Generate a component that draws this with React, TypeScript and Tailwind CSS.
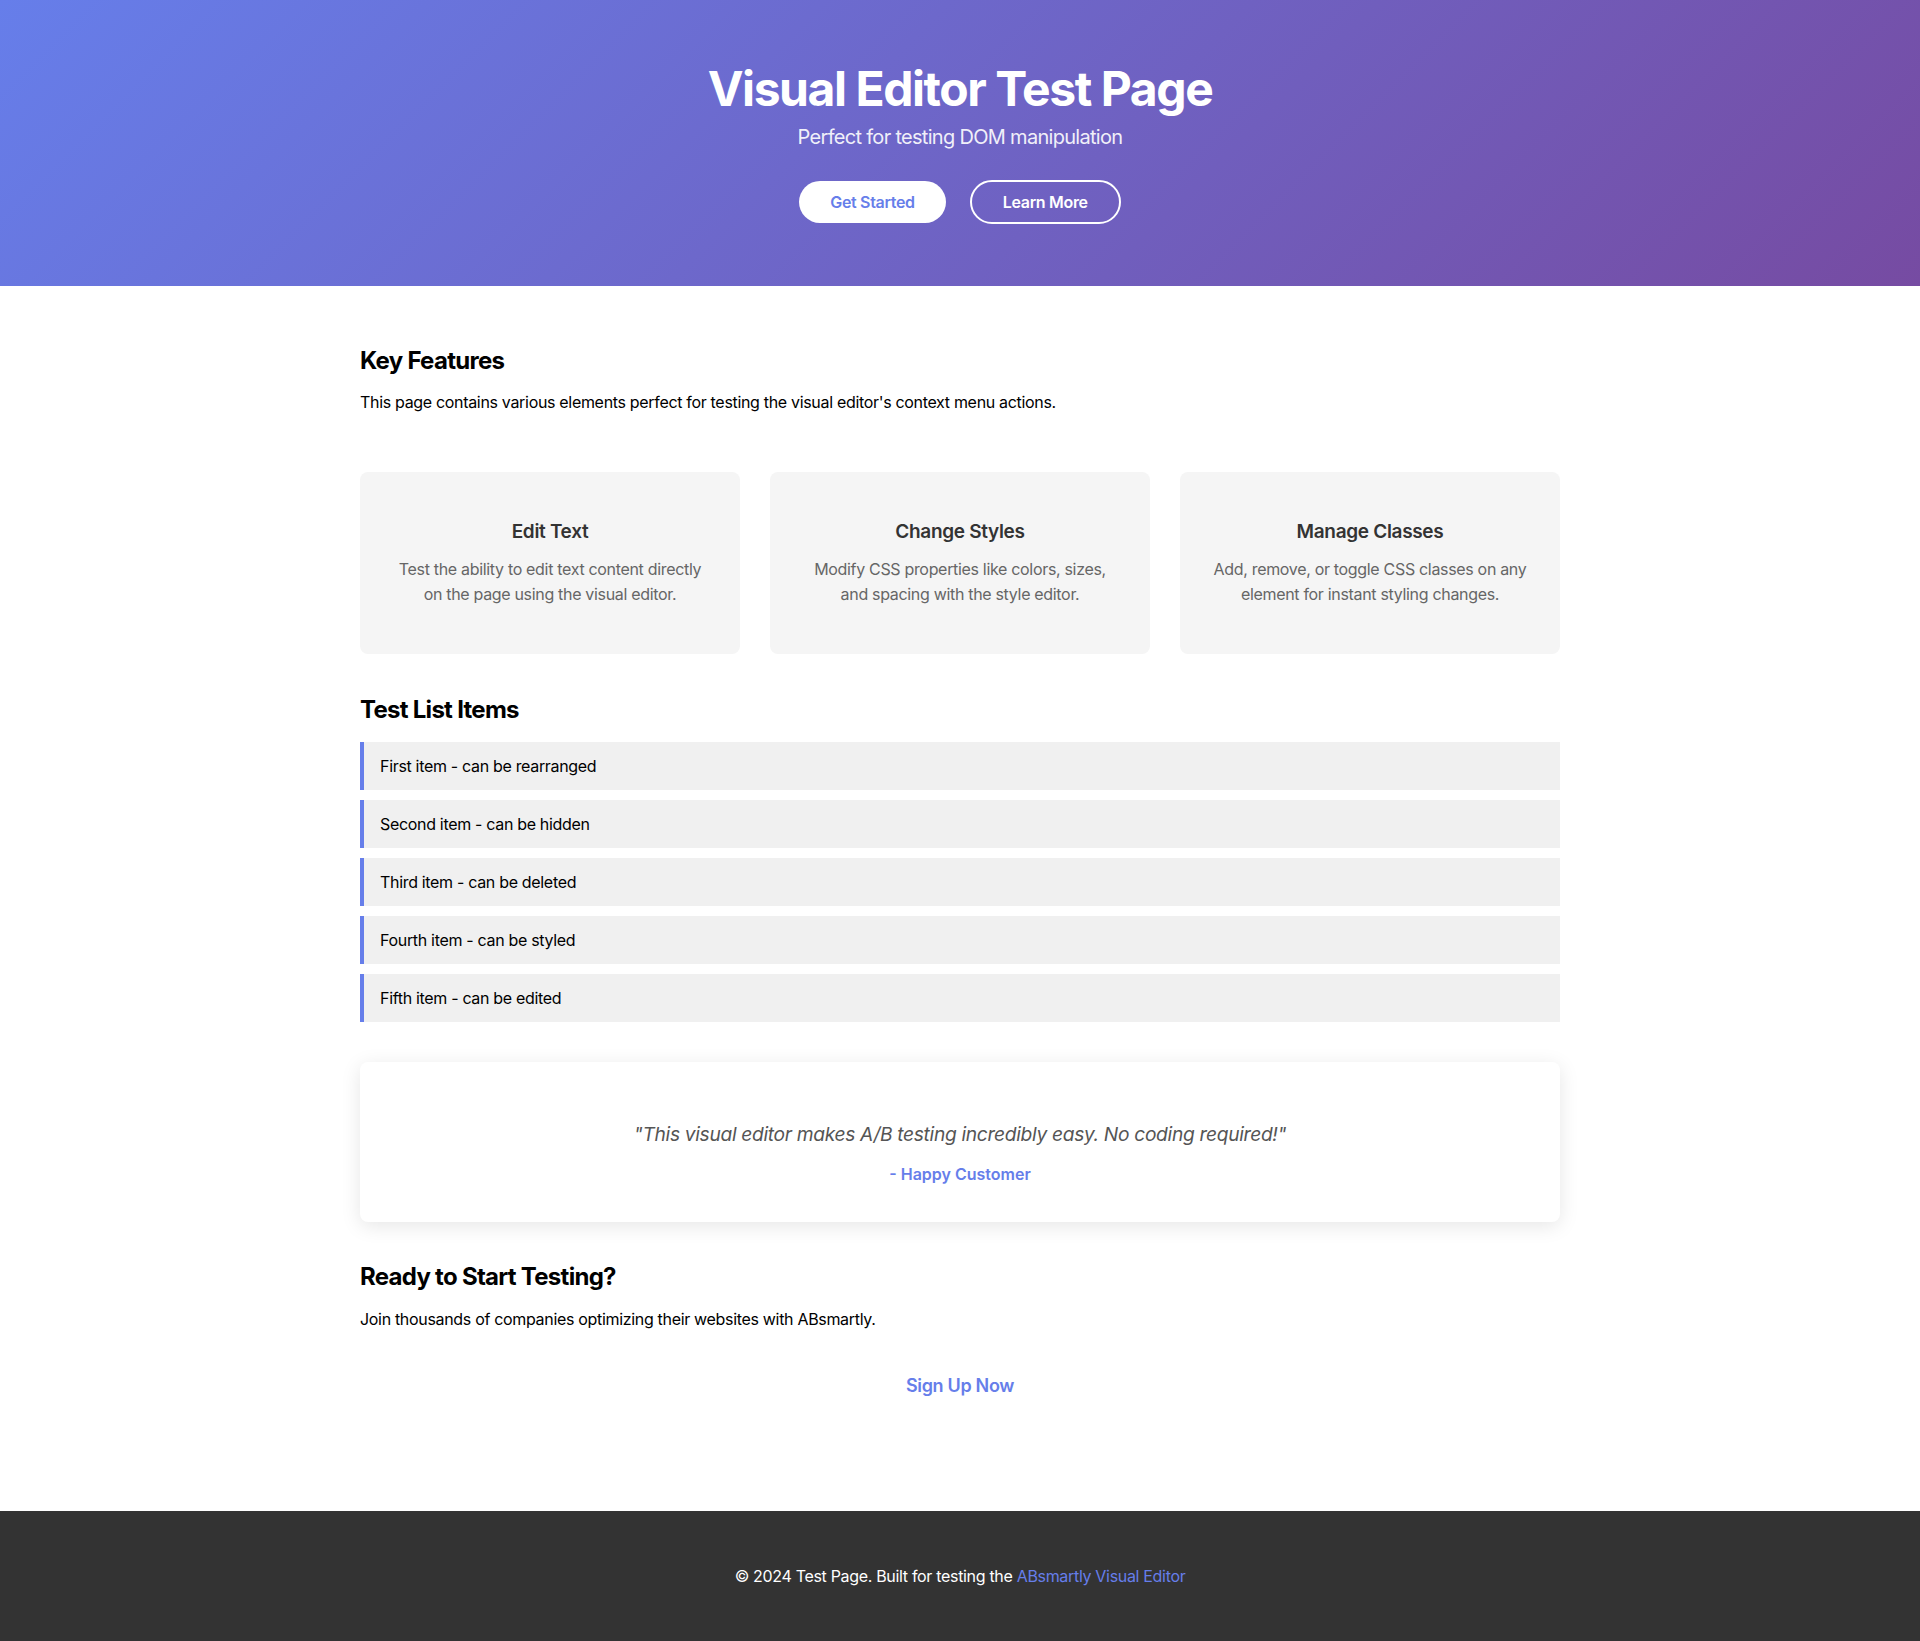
const features = [
  {
    title: 'Edit Text',
    text: 'Test the ability to edit text content directly on the page using the visual editor.',
  },
  {
    title: 'Change Styles',
    text: 'Modify CSS properties like colors, sizes, and spacing with the style editor.',
  },
  {
    title: 'Manage Classes',
    text: 'Add, remove, or toggle CSS classes on any element for instant styling changes.',
  },
];

const items = [
  'First item - can be rearranged',
  'Second item - can be hidden',
  'Third item - can be deleted',
  'Fourth item - can be styled',
  'Fifth item - can be edited',
];

export default function App() {
  return (
    <div className="min-h-[1641px] flex flex-col bg-white text-black tracking-[-0.02em] font-['Inter','Liberation_Sans',sans-serif]">
      {/* hero */}
      <header className="bg-[linear-gradient(135deg,#667eea_0%,#764ba2_100%)] text-white text-center pt-[60px] pb-[62px]">
        <h1 className="text-[48px] leading-[58px] font-bold tracking-[-0.03em]">Visual Editor Test Page</h1>
        <p className="mt-[4px] text-[20px] leading-[30px] opacity-90 tracking-[-0.035em]">
          Perfect for testing DOM manipulation
        </p>
        <div className="mt-[29px] flex justify-center gap-[24px]">
          <button className="h-[42px] px-[31px] rounded-full bg-white text-[#667eea] text-[16px] font-semibold">
            Get Started
          </button>
          <button className="h-[44px] -mt-px px-[31px] rounded-full border-2 border-white text-white text-[16px] font-semibold">
            Learn More
          </button>
        </div>
      </header>

      <main className="w-[1200px] mx-auto flex flex-col pt-[60px] pb-[100px]">
        <h2 className="text-[24px] leading-[29px] font-bold tracking-[-0.03em]">Key Features</h2>
        <p className="mt-[15px] text-[16px] leading-[25.6px]">
          This page contains various elements perfect for testing the visual editor's context menu actions.
        </p>

        <div className="mt-[56px] grid grid-cols-3 gap-[30px]">
          {features.map((f) => (
            <div key={f.title} className="bg-[#f5f5f5] rounded-[8px] text-center pt-[44px] pb-[46px] px-[30px]">
              <h3 className="text-[19px] leading-[32px] font-semibold text-[#333]">{f.title}</h3>
              <p className="mt-[9px] text-[16px] leading-[25.6px] text-[#666]">{f.text}</p>
            </div>
          ))}
        </div>

        <h2 className="mt-[41px] text-[24px] leading-[29px] font-bold tracking-[-0.03em]">Test List Items</h2>
        <ul className="mt-[18px] flex flex-col gap-[10px]">
          {items.map((item) => (
            <li key={item} className="bg-[#f0f0f0] border-l-4 border-[#667eea] pl-[16px] py-[12px] text-[16px] leading-[24px]">
              {item}
            </li>
          ))}
        </ul>

        <div className="mt-[40px] h-[160px] bg-white rounded-[8px] shadow-[0_4px_20px_rgba(0,0,0,0.1)] flex flex-col items-center text-center pt-[57px]">
          <p className="text-[19.2px] leading-[30px] italic text-[#555]">
            "This visual editor makes A/B testing incredibly easy. No coding required!"
          </p>
          <p className="mt-[13px] text-[16px] leading-[24px] font-semibold text-[#667eea] tracking-normal">
            - Happy Customer
          </p>
        </div>

        <h2 className="mt-[40px] text-[24px] leading-[29px] font-bold tracking-[-0.03em]">Ready to Start Testing?</h2>
        <p className="mt-[16px] text-[16px] leading-[25.6px]">
          Join thousands of companies optimizing their websites with ABsmartly.
        </p>
        <div className="mt-[39px] flex justify-center">
          <a className="text-[18px] leading-[29px] font-semibold text-[#667eea] cursor-pointer">Sign Up Now</a>
        </div>
      </main>

      <footer className="mt-auto h-[130px] bg-[#333] text-white flex items-center justify-center text-[16px]">
        <p>
          © 2024 Test Page. Built for testing the <a className="text-[#667eea]">ABsmartly Visual Editor</a>
        </p>
      </footer>
    </div>
  );
}
